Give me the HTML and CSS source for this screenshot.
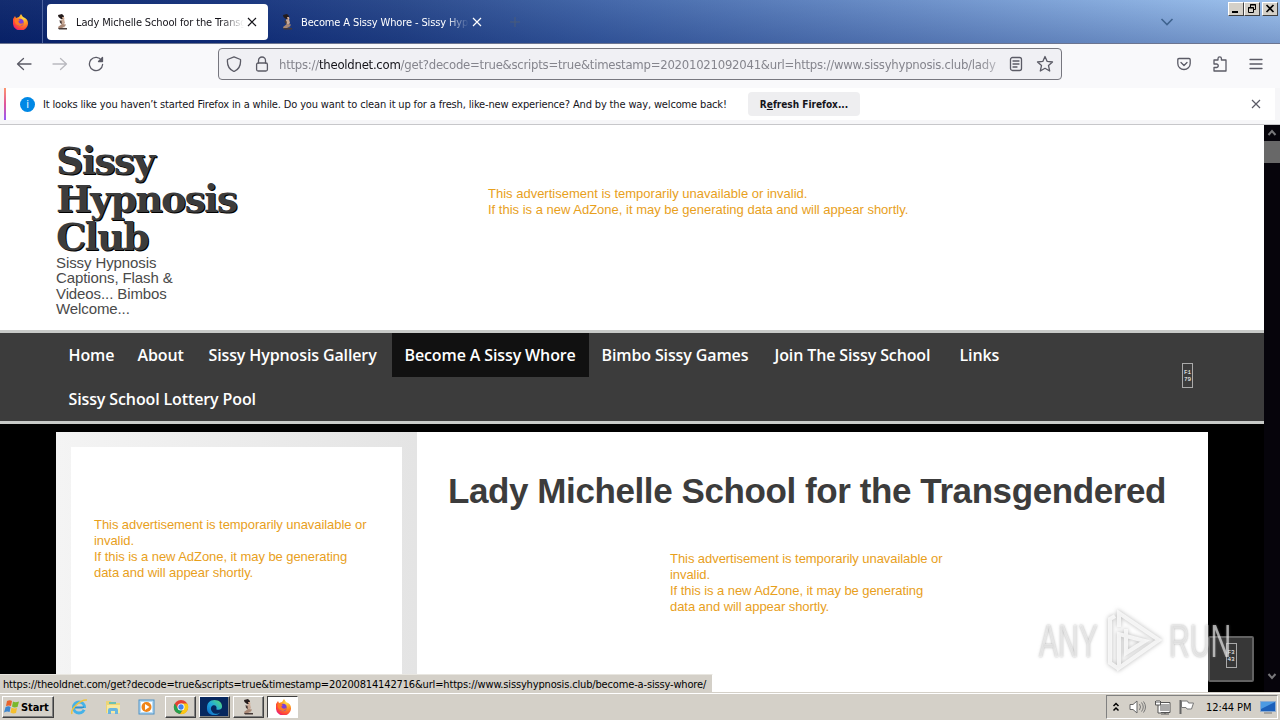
FILE: index.html
```html
<!DOCTYPE html>
<html lang="en">
<head>
  <meta charset="UTF-8">
  <title>Lady Michelle School for the Transgendered</title>
  <link rel="stylesheet" href="styles.css">
</head>
<body>

  <!-- shared icons -->
  <svg class="defs" width="0" height="0">
    <defs>
      <radialGradient id="foxBody" cx=".7" cy=".2" r=".9">
        <stop offset="0" stop-color="#ffe14a"/><stop offset=".4" stop-color="#ff9a1f"/><stop offset=".8" stop-color="#ff4338"/><stop offset="1" stop-color="#e31587"/>
      </radialGradient>
      <linearGradient id="edgeBody" x1="0" y1="1" x2="1" y2="0">
        <stop offset="0" stop-color="#0b62c4"/><stop offset=".5" stop-color="#20a9dc"/><stop offset="1" stop-color="#5ce06c"/>
      </linearGradient>
      <symbol id="fox" viewBox="0 0 16 16">
        <path d="M1 5 3 2l1 2 3-1 2-3 2 3c3 1 5 3 5 6a7.5 7 0 0 1-15 1z" fill="url(#foxBody)"/>
        <circle cx="8" cy="8.5" r="3.7" fill="#7a40d8"/>
        <path d="M3 5c2-1 4 0 5 1.500-2 0-2 2 0 3 2 .5 3-.5 4-1-1 3-4 4-6 3S2 8 3 5z" fill="#ff7a24"/>
      </symbol>
      <symbol id="figure" viewBox="0 0 16 16">
        <path d="M3 1l4-1 2 2-1 3H6L3.500 3z" fill="#241b1b"/>
        <path d="M7 3l2 0 .5 2L8 6z" fill="#d8b096"/>
        <path d="M6 5.500l3-.5L10 9l-2 2-2-1z" fill="#c8a894"/>
        <path d="M4.500 6l2 1 .5 3-2-1z" fill="#4a3c38"/>
        <path d="M7 10l4 .5-1 2-3 1 4 .5 1 1H4l-1-2z" fill="#a88876"/>
        <path d="M3 14h9v1.500H4z" fill="#463a38"/>
      </symbol>
    </defs>
  </svg>

  <div class="screen">

    <!-- tabs -->
    <div class="tabbar">
      <div class="fox-view"><svg width="16" height="16"><use href="#fox"/></svg></div>
      <div class="tab active">
        <svg width="16" height="16"><use href="#figure"/></svg>
        <span class="tab-text">Lady Michelle School for the Transgendered</span>
        <svg class="tab-x" width="10" height="10" viewBox="0 0 10 10"><path d="M1 1l8 8M9 1 1 9"/></svg>
      </div>
      <div class="tab">
        <svg width="16" height="16"><use href="#figure"/></svg>
        <span class="tab-text">Become A Sissy Whore - Sissy Hypnosis</span>
        <svg class="tab-x" width="10" height="10" viewBox="0 0 10 10"><path d="M1 1l8 8M9 1 1 9"/></svg>
      </div>
      <svg class="new-tab" width="10" height="10" viewBox="0 0 10 10"><path d="M5 0v10M0 5h10"/></svg>
      <svg class="all-tabs" width="14" height="10" viewBox="0 0 14 10"><path d="M1.500 2 7 7.500 12.500 2"/></svg>
      <div class="win-buttons">
        <span class="win-btn"><svg width="14" height="12"><path d="M3 9h6" stroke="#000" stroke-width="2"/></svg></span>
        <span class="win-btn"><svg width="14" height="12" fill="none" stroke="#000"><path d="M5.500 4V1.500h5v5H9M5 2h6"/><path d="M3.500 4.500h5v5h-5zM3 5h6"/></svg></span>
        <span class="win-btn close"><svg width="14" height="12"><path d="M3.500 2l7 7M10.500 2l-7 7" stroke="#000" stroke-width="1.700"/></svg></span>
      </div>
    </div>

    <!-- toolbar -->
    <div class="toolbar">
      <svg class="icon back" width="16" height="16" viewBox="0 0 16 16"><path d="M15 8H1.500M7.500 2.500 1.500 8l6 5.500"/></svg>
      <svg class="icon forward" width="16" height="16" viewBox="0 0 16 16"><path d="M1 8h13.500M8.500 2.500l6 5.500-6 5.500"/></svg>
      <svg class="icon" width="16" height="16" viewBox="0 0 16 16"><path d="M13.600 4.500A6.600 6.600 0 1 0 14.600 8.500"/><path d="M14.500 1.500v4H10.500z" fill="#5b5b66"/></svg>
      <div class="urlbar">
        <svg class="icon" width="16" height="16" viewBox="0 0 16 16"><path d="M8 .8 14.500 3.500c.4 5-1.500 10-6.500 12C3 13.500 1 8.500 1.500 3.500z"/></svg>
        <svg class="icon lock" width="14" height="16" viewBox="0 0 14 16"><rect x="1.600" y="7" width="10.800" height="8" rx="1.500"/><path d="M3.500 7V4.500a3.500 3.500 0 0 1 7 0V7"/></svg>
        <span class="url">https://<b>theoldnet.com</b>/get?decode=true&amp;scripts=true&amp;timestamp=20201021092041&amp;url=https://www.sissyhypnosis.club/lady</span>
        <svg class="icon" width="14" height="16" viewBox="0 0 14 16"><rect x="1.500" y="1.500" width="11" height="13" rx="2"/><path d="M4 5h6M4 8h6M4 11h4"/></svg>
        <svg class="icon star" width="18" height="18" viewBox="0 0 18 18"><path d="M9 1.500l2.200 4.900 5.300.6-4 3.600 1.200 5.400L9 13.300 4.300 16l1.200-5.400-4-3.600 5.300-.6z"/></svg>
      </div>
      <div class="tools">
        <svg class="icon" width="14" height="14" viewBox="0 0 14 14"><path d="M2 1.500h10q1.200 0 1.200 1.200V6.500A6.200 6 0 0 1 .8 6.500V2.700Q.8 1.500 2 1.500zM4 5.500l3 3 3-3"/></svg>
        <svg class="icon" width="16" height="16" viewBox="0 0 16 16"><path d="M6 4V2.500a1.700 1.700 0 0 1 3.400 0V4h4.600v11H2v-3.500h2.500a1.700 1.700 0 0 0 0-3.500H2V4z"/></svg>
        <svg class="icon" width="14" height="14" viewBox="0 0 14 14"><path d="M1 2.500h12M1 7h12M1 11.500h12"/></svg>
      </div>
    </div>

    <!-- notification -->
    <div class="notice-row">
      <div class="notice">
        <span class="info">i</span>
        <span class="notice-text">It looks like you haven’t started Firefox in a while. Do you want to clean it up for a fresh, like-new experience? And by the way, welcome back!</span>
        <button class="refresh">R<u>e</u>fresh Firefox...</button>
        <svg class="notice-x" width="10" height="10" viewBox="0 0 10 10"><path d="M1 1l8 8M9 1 1 9"/></svg>
      </div>
    </div>

    <div class="viewport">
      <div class="page">
        <header>
          <div class="brand">
            <div class="site-title">Sissy<br>Hypnosis<br>Club</div>
            <div class="tagline">Sissy Hypnosis<br>Captions, Flash &amp;<br>Videos... Bimbos<br>Welcome...</div>
          </div>
          <p class="ad">This advertisement is temporarily unavailable or invalid.<br>If this is a new AdZone, it may be generating data and will appear shortly.</p>
        </header>

        <nav>
          <ul>
            <li class="n1">Home</li>
            <li class="n2">About</li>
            <li class="n3">Sissy Hypnosis Gallery</li>
            <li class="n4 current">Become A Sissy Whore</li>
            <li class="n5">Bimbo Sissy Games</li>
            <li class="n6">Join The Sissy School</li>
            <li class="n7">Links</li>
            <li class="n8">Sissy School Lottery Pool</li>
          </ul>
          <span class="glyph">F1<br>79</span>
        </nav>

        <div class="columns">
          <aside>
            <div class="widget">
              <p class="ad">This advertisement is temporarily unavailable or<br>invalid.<br>If this is a new AdZone, it may be generating<br>data and will appear shortly.</p>
            </div>
          </aside>
          <main>
            <h1>Lady Michelle School for the Transgendered</h1>
            <p class="ad">This advertisement is temporarily unavailable or<br>invalid.<br>If this is a new AdZone, it may be generating<br>data and will appear shortly.</p>
          </main>
        </div>
      </div>

      <div class="scrollbar">
        <svg width="16" height="16" viewBox="0 0 16 16"><path d="M4.500 10 8 6l3.500 4"/></svg>
        <div class="thumb"></div>
        <svg class="down" width="16" height="16" viewBox="0 0 16 16"><path d="M4.500 6 8 10l3.500-4"/></svg>
      </div>

      <div class="to-top"><span class="glyph">F3<br>43</span></div>
      <div class="status">https://theoldnet.com/get?decode=true&amp;scripts=true&amp;timestamp=20200814142716&amp;url=https://www.sissyhypnosis.club/become-a-sissy-whore/</div>
      <div class="watermark">
        <span>ANY</span>
        <svg width="60" height="64" viewBox="0 0 60 64"><path d="M10 7 5 10v44l9 6M14 18V4l40 27-40 28V25l26 7-19 12V20"/></svg>
        <span>RUN</span>
      </div>
    </div>

    <!-- taskbar -->
    <div class="taskbar">
      <div class="start">
        <svg width="16" height="16" viewBox="0 0 16 16"><path d="M3 2q3-1.500 5 0L7 7Q5 6 2 7z" fill="#e8632c"/><path d="M9 2.500q2 1.500 6 0L13.500 8Q10 9 8 7.500z" fill="#79b82b"/><path d="M1.600 8q3-1.500 5 0l-1 5Q3 12 0 13.500z" fill="#3c86cf"/><path d="M7.500 8.500q2.500 1.500 5.500.500L12 14q-3 1-5.500-.500z" fill="#f5bf2e"/></svg>
        Start
      </div>
      <div class="quick">
        <svg width="18" height="18" viewBox="0 0 18 18"><circle cx="9" cy="9.500" r="5.500" fill="none" stroke="#45b2e8" stroke-width="3"/><path d="M5 9.500h9" stroke="#2d91d0" stroke-width="2"/><path d="M14 12h3v-2h-5z" fill="#d4d0c8"/><path d="M2 16C0 11 11 1 17 2" fill="none" stroke="#efc33d" stroke-width="1.500"/></svg>
        <svg width="18" height="18" viewBox="0 0 18 18"><path d="M2 3h5l1 2h8v10H2z" fill="#ecd576"/><path d="M3 7h13v8H3z" fill="#f7e9a0"/><path d="M4 16v-4q0-2 2-2h6q2 0 2 2v4h-3v-3H7v3z" fill="#69b6df"/><path d="M5 4h7v2H5z" fill="#6dc1b2"/></svg>
        <svg width="18" height="18" viewBox="0 0 18 18"><rect x="1" y="2" width="15" height="14" fill="#b9dcf4" stroke="#4e92c6"/><rect x="3" y="4" width="11" height="10" fill="#fff"/><circle cx="8.500" cy="9" r="5" fill="#ef8519"/><path d="M7 6v6l4.500-3z" fill="#fff"/></svg>
      </div>
      <div class="tasks">
        <span class="task"><svg width="16" height="16" viewBox="0 0 18 18"><circle cx="9" cy="9" r="8" fill="#e34133"/><path d="M2 5a8 8 0 0 0 6 12l4-7-3-1-4 1z" fill="#24a04d"/><path d="M8 17A8 8 0 0 0 16 5H9l3.500 5z" fill="#fbc914"/><circle cx="9" cy="9" r="4" fill="#fff"/><circle cx="9" cy="9" r="3" fill="#4182ed"/></svg></span>
        <span class="task edge"><svg width="17" height="17" viewBox="0 0 18 18"><path d="M1 10C1 4 4 1 9 1s8 3 8 7c0 3-3 4-6 3 1-3-1-5-4-4-3 2-2 6 1 8 3 1 5 1 7-1-2 3-5 3-7 3-4 0-7-3-7-7z" fill="url(#edgeBody)"/></svg></span>
        <span class="task"><svg width="16" height="16"><use href="#figure"/></svg></span>
        <span class="task pressed"><svg width="16" height="16"><use href="#fox"/></svg></span>
      </div>
      <div class="tray">
        <svg width="10" height="12" viewBox="0 0 10 12"><path d="M2.500 5 5 2.500 7.500 5M2.500 9.500 5 7l2.500 2.500" fill="none" stroke="#000" stroke-width="1.500"/></svg>
        <svg class="speaker" width="18" height="16" viewBox="0 0 18 16"><path d="M1 5.500h3L8 2v12l-4-3.500H1z" fill="#fff" stroke="#666"/><path d="M10.500 5q2 3 0 6M12.500 3.500q3.500 4.500 0 9M14.500 2.500q4 5.500 0 11" fill="none" stroke="#777"/></svg>
        <svg class="net" width="18" height="16" viewBox="0 0 18 16"><rect x="5.500" y="4.500" width="10" height="8" fill="#aaa" stroke="#fff"/><path d="M5 3.500h11v10H5M7 15h8M11 13v2" fill="none" stroke="#555"/><path d="M1.500 2v4h5V2M3 1v3M5 1v3M4 6v8h3" fill="#fff" stroke="#555"/></svg>
        <svg class="flag" width="17" height="16" viewBox="0 0 17 16"><path d="M2.500 1v14" stroke="#666" stroke-width="2"/><path d="M3.500 2h6l1 2h5l-2 6H9L8 8.500H3.500z" fill="#fff" stroke="#777"/></svg>
        <span class="clock">12:44 PM</span>
        <svg width="16" height="14" viewBox="0 0 16 14"><path d="M.5 1.500h15v10H.5z" fill="#1c60ba" stroke="#8cabd0"/><path d="M1 2h14L1 9z" fill="#4c9ae3"/><path d="M4 13h8" stroke="#777"/></svg>
      </div>
    </div>
  </div>

</body>
</html>
```

FILE: styles.css
```css
* { box-sizing: border-box; }
body {
  margin: 0;
  background: #000;
  font-family: "Liberation Sans", Arial, sans-serif;
}
.defs { position: absolute; }
svg { flex: none; display: block; }
p { margin: 0; }
.screen {
  width: 1280px;
  height: 720px;
  display: flex;
  flex-direction: column;
  overflow: hidden;
}
.tabbar, .toolbar, .notice, .status, .taskbar {
  font-family: Tahoma, "DejaVu Sans Condensed", "DejaVu Sans", sans-serif;
  font-stretch: condensed;
  font-size: 11px;
  white-space: nowrap;
}

/* tabs */
.tabbar {
  flex: none;
  height: 44px;
  display: flex;
  align-items: center;
  background: linear-gradient(rgba(255,255,255,.04), rgba(0,20,90,.22)), linear-gradient(90deg, #0a246a 0, #12307b 230px, #244488 400px, #3d62a6 600px, #668bc6 900px, #84aadd 1120px, #9cc1ed 1280px);
  border-bottom: 1px solid #6c7590;
}
.fox-view {
  width: 43px;
  height: 43px;
  padding: 14px 0 0 12px;
  border-right: 1px solid #4f65a0;
}
.tab {
  display: flex;
  align-items: center;
  width: 221px;
  height: 36px;
  margin-left: 4px;
  padding: 0 8px;
  border-radius: 4px;
  color: #fff;
}
.tab.active { background: #fff; color: #15141a; }
.tab-text {
  width: 168px;
  margin-left: 5px;
  padding-top: 2px;
  overflow: hidden;
  letter-spacing: -.13px;
  -webkit-mask-image: linear-gradient(90deg, #000 145px, transparent);
}
.tab-x, .notice-x { fill: none; stroke: currentColor; stroke-width: 1.2; }
.tab-x { margin-left: 3px; }
.new-tab { margin-left: 17px; stroke: #5b6268; opacity: .6; }
.all-tabs { margin-left: auto; fill: none; stroke: #3f638f; stroke-width: 1.6; }
.win-buttons { display: flex; align-self: flex-start; margin: 2px 2px 0 54px; }
.win-btn {
  width: 16px;
  height: 14px;
  background: #d4d0c8;
  border: 1px solid;
  border-color: #fff #404040 #404040 #fff;
}
.win-btn.close { margin-left: 2px; }

/* toolbar */
.toolbar {
  flex: none;
  height: 44px;
  display: flex;
  align-items: center;
  padding: 0 17px 4px 16px;
  background: #f9f9fb;
}
.icon { fill: none; stroke: #5b5b66; stroke-width: 1.3; stroke-linejoin: round; stroke-linecap: round; }
.icon.forward { margin: 0 20px; opacity: .4; }
.urlbar {
  width: 844px;
  height: 32px;
  margin-left: 114px;
  padding: 0 7px;
  display: flex;
  align-items: center;
  background: #f0f0f4;
  border: 1px solid #77777f;
  border-radius: 4px;
}
.lock { margin-left: 13px; }
.url {
  width: 723px;
  margin: 0 9px 0 10px;
  overflow: hidden;
  font-size: 13px;
  letter-spacing: -.25px;
  color: #85858d;
  -webkit-mask-image: linear-gradient(90deg, #000 700px, transparent 735px);
}
.url b { font-weight: normal; color: #15141a; }
.star { margin-left: 13px; }
.tools { margin-left: auto; display: flex; align-items: center; gap: 21px; }

/* notification */
.notice-row {
  flex: none;
  height: 37px;
  padding: 0 5px 0 4px;
  background: #f6f6f8;
  border-bottom: 1px solid #c7c7ca;
}
.notice {
  height: 32px;
  display: flex;
  align-items: center;
  padding: 0 14px;
  background: #fff;
  border-left: 2px solid;
  border-image: linear-gradient(#ff9a6a, #e0559a, #9059ff) 1;
}
.info {
  width: 15px;
  height: 15px;
  border-radius: 50%;
  background: #0088e5;
  color: #fff;
  text-align: center;
  line-height: 15px;
}
.notice-text { width: 705px; margin-left: 8px; color: #15141a; letter-spacing: -.15px; }
.refresh {
  width: 112px;
  height: 24px;
  padding: 0;
  background: #eeeef0;
  border: 0;
  border-radius: 4px;
  color: #15141a;
  font: bold 10px "DejaVu Sans Condensed", "DejaVu Sans", sans-serif;
}
.notice-x { margin-left: auto; stroke: #5b5b66; }

/* page area */
.viewport { position: relative; height: 567px; display: flex; overflow: hidden; }
.page { width: 1264px; background: #000; }
header { height: 205px; display: flex; background: #fff; padding: 17px 56px 0; }
.brand { width: 432px; }
.site-title {
  font: bold 38px/38px "DejaVu Serif", Georgia, serif;
  letter-spacing: -1.8px;
  color: #3c3c3c;
  text-shadow: 1px 1px #000;
}
.tagline { font-size: 15px; line-height: 15.4px; color: #4a4a4a; margin-top: -1px; letter-spacing: -.1px; }
.ad { font-size: 13px; line-height: 16px; color: #e8a01c; white-space: nowrap; letter-spacing: -.06px; }
header .ad { margin-top: 44px; letter-spacing: 0; }
nav {
  height: 94px;
  display: flex;
  padding: 0 56px;
  background: #3c3c3c;
  border: solid #c8cac8;
  border-width: 3px 0;
}
nav ul {
  display: flex;
  flex-wrap: wrap;
  width: 1000px;
  margin: 0;
  padding: 0;
  list-style: none;
}
nav li {
  height: 44px;
  padding: 0 12.5px;
  font: 600 16px/44px "Trebuchet MS", "Open Sans", sans-serif;
  letter-spacing: -.12px;
  color: #fff;
  white-space: nowrap;
}
nav li.current { background: #111; }
.n1 { width: 69px; }
.n2 { width: 71px; }
.n3 { width: 196px; }
.n4 { width: 197px; }
.n5 { width: 173px; }
.n6 { width: 185px; }
.n7 { width: 68px; }
.n8 { width: 214px; }
.glyph {
  width: 11px;
  height: 25px;
  padding-top: 5px;
  border: 1px solid #aaa;
  color: #fff;
  font: 6px/7px "Liberation Mono", monospace;
  text-align: center;
}
nav .glyph { margin: 30px 0 0 126px; }
.columns { display: flex; width: 1152px; height: 280px; margin: 8px 0 0 56px; }
aside { width: 361px; padding: 15px; background: linear-gradient(90deg, #f4f4f4, #e4e4e4); }
.widget { height: 280px; padding: 70px 23px 0; background: #fff; }
main { width: 791px; background: #fff; padding: 38px 31px 0; }
h1 { margin: 0; color: #3c3c3c; font-size: 35px; line-height: 42px; letter-spacing: -.41px; white-space: nowrap; }
main .ad { margin: 39px 0 0 222px; }
.scrollbar { width: 16px; background: #06040b; }
.scrollbar svg { fill: none; stroke: #77777a; stroke-width: 2; }
.thumb { height: 22px; background: #686868; }
.scrollbar .down { margin-top: 505px; }

/* things floating over the page */
.to-top {
  position: absolute;
  left: 1208px;
  top: 511px;
  width: 46px;
  height: 46px;
  display: flex;
  justify-content: center;
  padding-top: 5px;
  background: #373737;
  border: 2px solid #626262;
  border-radius: 2px;
}
.status {
  position: absolute;
  left: 0;
  bottom: 0;
  width: 713px;
  height: 18px;
  padding-left: 3px;
  line-height: 19px;
  letter-spacing: -.155px;
  background: #d4d0c8;
  border-top: 1px solid #e8e6e0;
  border-right: 1px solid #fff;
}
.watermark {
  position: absolute;
  left: 1039px;
  top: 484px;
  display: flex;
  align-items: center;
  gap: 4px;
  color: rgba(250,250,250,.6);
  font: 47px/64px "Liberation Sans", sans-serif;
  text-shadow: 0 0 3px rgba(120,120,120,.6);
}
.watermark span { width: 62px; transform: scaleX(.61); transform-origin: left; }
.watermark svg { fill: none; stroke: rgba(250,250,250,.85); stroke-width: 4; filter: drop-shadow(0 0 2px rgba(90,90,90,.5)); }

/* taskbar */
.taskbar {
  flex: none;
  height: 28px;
  display: flex;
  align-items: center;
  padding: 1px 2px 0;
  background: #d4d0c8;
  border-top: 1px solid #d4d0c8;
  box-shadow: inset 0 1px #fff;
}
.start, .task {
  height: 22px;
  background: #d4d0c8;
  border: 1px solid;
  border-color: #fff #404040 #404040 #fff;
  box-shadow: inset -1px -1px #808080;
}
.start {
  width: 52px;
  display: flex;
  align-items: center;
  gap: 1px;
  padding-left: 1px;
  font-weight: bold;
  letter-spacing: -.1px;
}
.quick { display: flex; gap: 16px; margin-left: 16px; }
.tasks { display: flex; gap: 3px; margin-left: 9px; }
.task { width: 31px; display: flex; align-items: center; justify-content: center; }
.task.edge { background: #07275e; }
.task.pressed { background: #fff; border-color: #404040 #fff #fff #404040; box-shadow: none; }
.tray {
  width: 172px;
  height: 24px;
  margin-left: auto;
  display: flex;
  align-items: center;
  padding-left: 4px;
  border: 1px solid;
  border-color: #808080 #fff #fff #808080;
}
.speaker { margin-left: 8px; }
.net { margin-left: 7px; }
.flag { margin-left: 6px; }
.clock { width: 54px; margin-left: 11px; letter-spacing: -.1px; }
```
